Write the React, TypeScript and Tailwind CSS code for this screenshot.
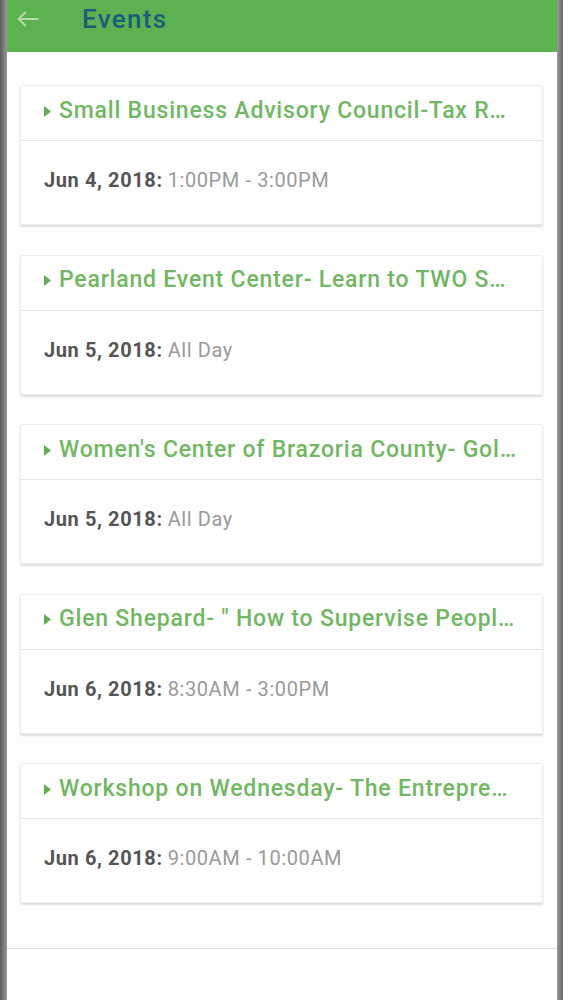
import React from 'react';

const events = [
  { title: 'Small Business Advisory Council-Tax R…', date: 'Jun 4, 2018:', time: '1:00PM - 3:00PM' },
  { title: 'Pearland Event Center- Learn to TWO S…', date: 'Jun 5, 2018:', time: 'All Day' },
  { title: "Women's Center of Brazoria County- Gol…", date: 'Jun 5, 2018:', time: 'All Day' },
  { title: 'Glen Shepard- " How to Supervise Peopl…', date: 'Jun 6, 2018:', time: '8:30AM - 3:00PM' },
  { title: 'Workshop on Wednesday- The Entrepre…', date: 'Jun 6, 2018:', time: '9:00AM - 10:00AM' },
];

function EventCard({ title, date, time }: { title: string; date: string; time: string }) {
  return (
    <div className="bg-white border border-[#ececec] rounded-[2px] shadow-[0_2px_2px_rgba(0,0,0,0.12)]">
      <div className="h-[55px] flex items-center pl-[23px] pr-[20px] pb-[4px] border-b border-[#e6e6e6]">
        <svg width="7" height="11" viewBox="0 0 7 11" className="shrink-0 mr-[8px]">
          <path d="M0 0 L7 5.5 L0 11 Z" fill="#5fae4f" />
        </svg>
        <span className="truncate text-[23px] font-medium text-[#70b862] tracking-[0.8px]">{title}</span>
      </div>
      <div className="h-[83px] flex items-center pl-[23px] pb-[5px] text-[20px] tracking-[0.6px]">
        <span className="font-bold text-[#555]">{date}</span>
        <span className="ml-[5px] text-[#9a9a9a]">{time}</span>
      </div>
    </div>
  );
}

export default function App() {
  return (
    <div className="w-[563px] h-[1000px] flex bg-[#777] overflow-hidden" style={{ fontFamily: 'Roboto, "Noto Sans", sans-serif' }}>
      <div className="w-[7px] shrink-0 bg-gradient-to-r from-[#5c5c5c] to-[#9a9a9a]" />
      <div className="flex-1 flex flex-col bg-[#fdfdfd]">
        <div className="h-[52px] shrink-0 bg-[#5cb24e] flex items-center pb-[14px]">
          <svg width="28" height="28" viewBox="0 0 24 24" className="ml-[7px]" fill="none" stroke="#b4dca8" strokeWidth="1.6">
            <path d="M21 12H4M10 6l-6 6 6 6" />
          </svg>
          <span className="ml-[40px] text-[26px] text-[#1b5e7c] font-medium tracking-[1.3px]">Events</span>
        </div>
        <div className="flex flex-col gap-[29.5px] pt-[33px] pl-[13px] pr-[14px]">
          {events.map((e, i) => (
            <EventCard key={i} {...e} />
          ))}
        </div>
        <div className="mt-[45px] border-t border-[#e2e2e2] flex-1 bg-[#fefefe]" />
      </div>
      <div className="w-[6px] shrink-0 bg-gradient-to-r from-[#9a9a9a] to-[#666]" />
    </div>
  );
}
